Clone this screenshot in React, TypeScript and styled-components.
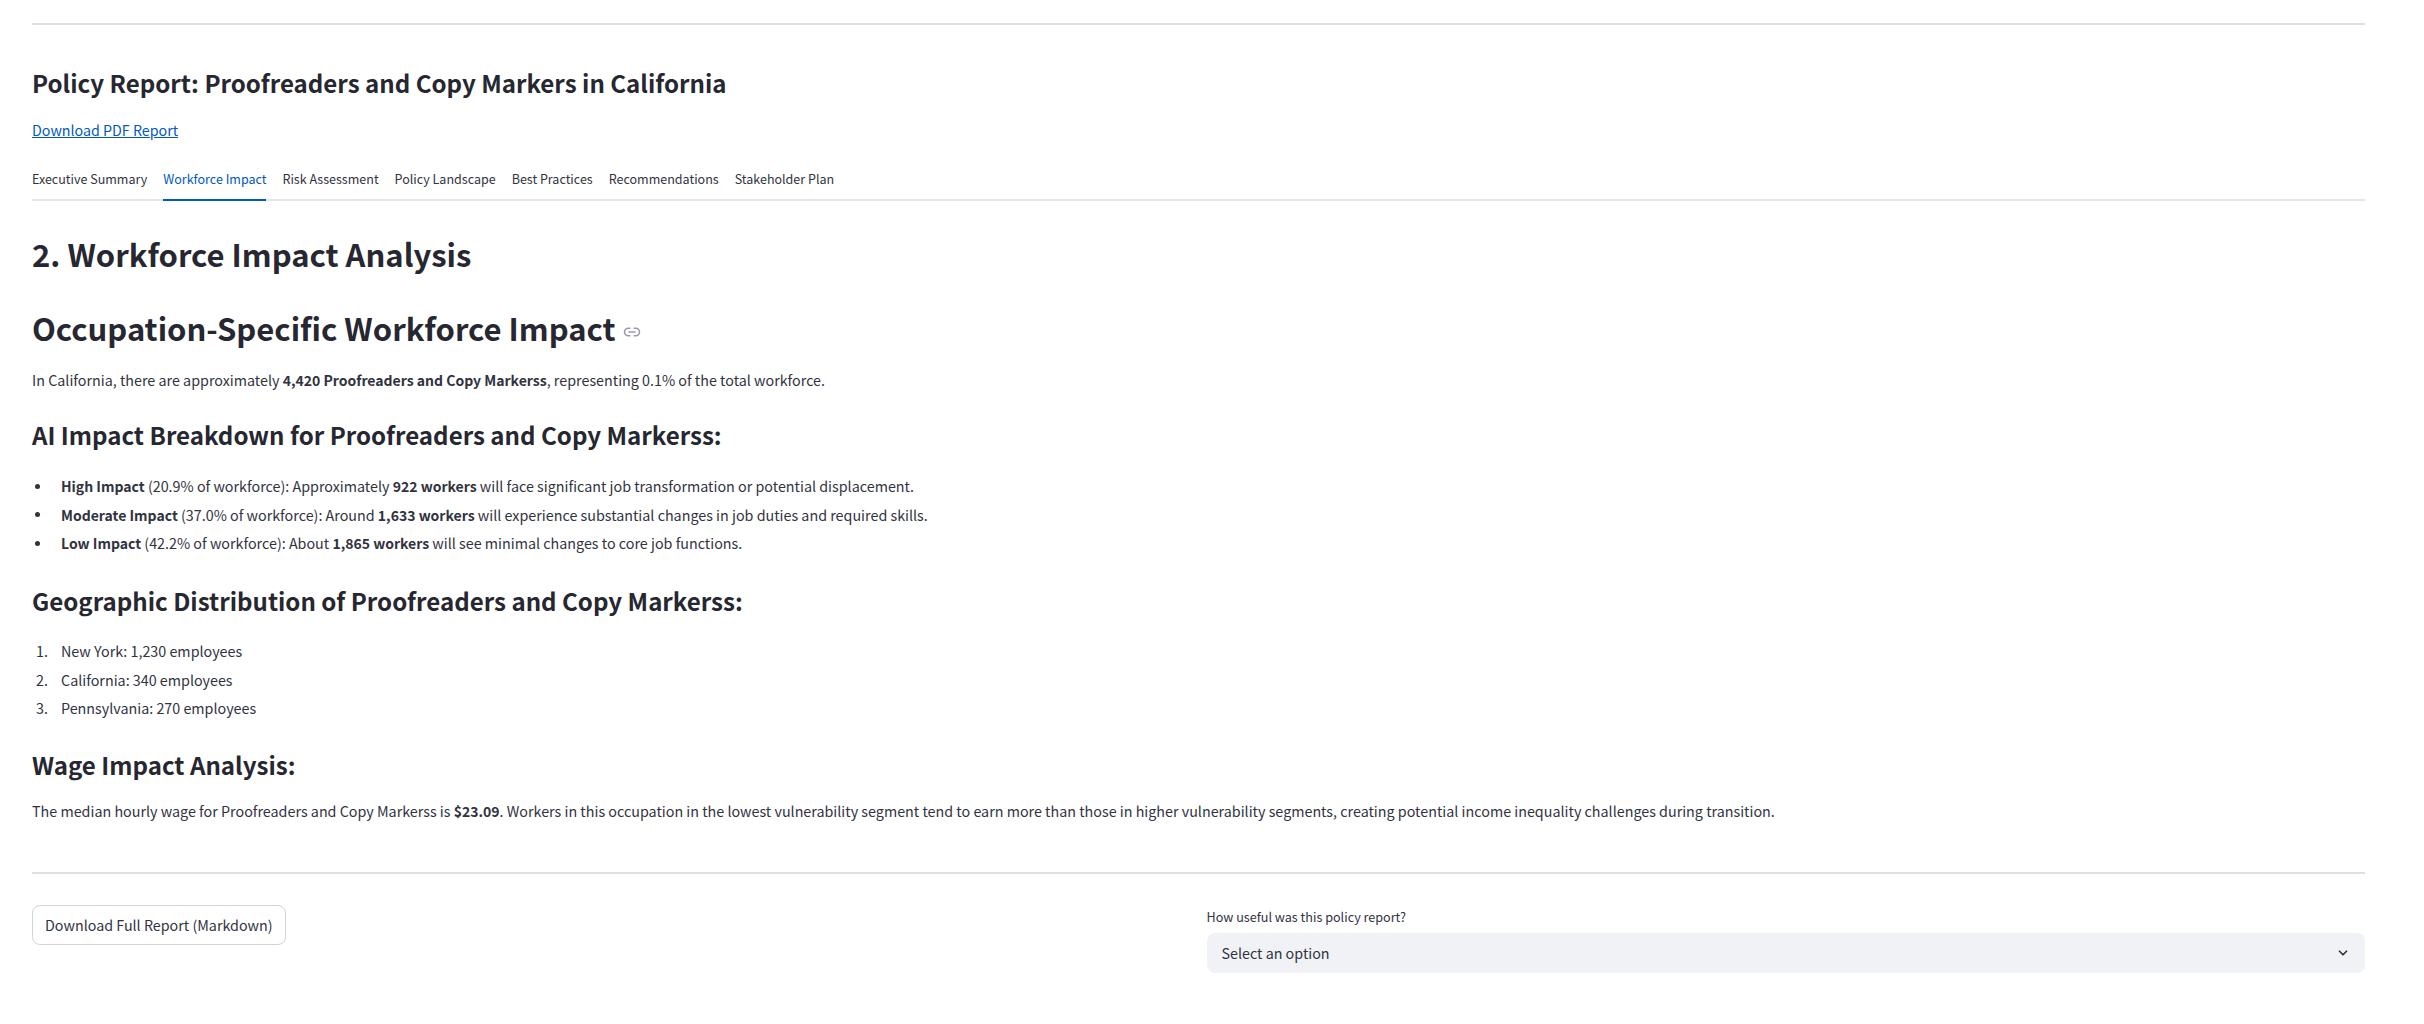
import React from "react";
import styled, { createGlobalStyle } from "styled-components";
import { ChevronDown } from "lucide-react";

const GlobalStyle = createGlobalStyle`
  html, body {
    margin: 0;
    padding: 0;
    background: #ffffff;
  }
  body {
    font-family: "Noto Sans CJK SC", "Noto Sans", sans-serif;
    color: #31333f;
  }
  * {
    box-sizing: border-box;
  }
`;

const Page = styled.div`
  height: 1024px;
  overflow: hidden;
  padding: 23px 59px 0 32px;
`;

const Rule = styled.hr<{ $top?: number; $bottom?: number }>`
  border: 0;
  height: 2px;
  margin: ${(p) => p.$top ?? 0}px 0 ${(p) => p.$bottom ?? 0}px;
  background: #dfdfdf;
`;

const Title = styled.h1`
  margin: 38px 0 0;
  font-size: 24.1px;
  line-height: 40px;
  font-weight: 600;
  color: #262730;
`;

const PdfLink = styled.a`
  display: block;
  margin-top: 15px;
  font-size: 14.25px;
  line-height: 24px;
  color: #0059c1;
  text-decoration: underline;
`;

const TabBar = styled.div`
  display: flex;
  gap: 16px;
  margin-top: 19px;
  border-bottom: 2px solid #e6e6e9;
  height: 40px;
`;

const Tab = styled.div<{ $active?: boolean }>`
  height: 40px;
  font-size: 12.53px;
  line-height: 36px;
  color: ${(p) => (p.$active ? "#0059c1" : "#31333f")};
  border-bottom: 2px solid ${(p) => (p.$active ? "#0059c1" : "transparent")};
`;

const SectionTitle = styled.h2`
  margin: 28px 0 0;
  font-size: 31px;
  line-height: 50px;
  font-weight: 600;
  color: #262730;
`;

const AnchorHeading = styled(SectionTitle)`
  display: flex;
  align-items: center;
  gap: 7px;
  margin-top: 24px;
`;

const LinkMark = styled.svg`
  width: 18px;
  height: 18px;
  margin-top: 8px;
  fill: none;
  stroke: #9a9ca3;
  stroke-width: 2;
  stroke-linecap: round;
`;

const SubTitle = styled.h3<{ $top?: number }>`
  margin: ${(p) => p.$top ?? 22}px 0 0;
  font-size: 24.1px;
  line-height: 40px;
  font-weight: 600;
  color: #262730;
`;

const Para = styled.p<{ $top?: number }>`
  margin: ${(p) => p.$top ?? 14}px 0 0;
  font-size: 14.32px;
  line-height: 24px;
`;

const List = styled.ul<{ $top?: number }>`
  margin: ${(p) => p.$top ?? 16}px 0 0;
  padding: 0;
  list-style: none;
  font-size: 14.32px;
  line-height: 24px;
`;

const Item = styled.li`
  display: flex;
  margin-bottom: 4.6px;
`;

const MarkerCell = styled.span`
  flex: 0 0 29px;
  display: flex;
  align-items: center;
  padding-left: 4px;
`;

const Bullet = styled.span`
  width: 5px;
  height: 5px;
  margin-left: -1px;
  border-radius: 50%;
  background: #31333f;
`;

const Strong = styled.strong`
  font-size: 14px;
  font-weight: 600;
`;

const Footer = styled.div`
  display: grid;
  grid-template-columns: 1fr 1fr;
  gap: 16px;
  margin-top: 30px;
`;

const GhostButton = styled.button`
  height: 40px;
  margin-top: 1px;
  padding: 0 12px 2px;
  font-family: inherit;
  font-size: 14.3px;
  color: #31333f;
  background: #ffffff;
  border: 1px solid #d2d3d6;
  border-radius: 8px;
`;

const FieldLabel = styled.div`
  margin-top: 3px;
  margin-bottom: 6px;
  font-size: 12.6px;
  line-height: 20px;
`;

const SelectBox = styled.div`
  display: flex;
  align-items: center;
  justify-content: space-between;
  height: 40px;
  padding: 0 15px;
  font-size: 14.3px;
  background: #f0f2f6;
  border-radius: 8px;
`;

const SelectText = styled.span`
  margin-top: -1px;
`;

export default function App() {
  return (
    <>
      <GlobalStyle />
      <Page>
        <Rule />
        <Title>Policy Report: Proofreaders and Copy Markers in California</Title>
        <PdfLink href="#">Download PDF Report</PdfLink>
        <TabBar>
          <Tab>Executive Summary</Tab>
          <Tab $active>Workforce Impact</Tab>
          <Tab>Risk Assessment</Tab>
          <Tab>Policy Landscape</Tab>
          <Tab>Best Practices</Tab>
          <Tab>Recommendations</Tab>
          <Tab>Stakeholder Plan</Tab>
        </TabBar>
        <SectionTitle>2. Workforce Impact Analysis</SectionTitle>
        <AnchorHeading>
          Occupation-Specific Workforce Impact
          <LinkMark viewBox="0 0 24 24">
            <path d="M9 17H7A5 5 0 0 1 7 7h2" />
            <path d="M15 7h2a5 5 0 1 1 0 10h-2" />
            <line x1="8" x2="16" y1="12" y2="12" />
          </LinkMark>
        </AnchorHeading>
        <Para $top={15}>
          In California, there are approximately <Strong>4,420 Proofreaders and Copy Markerss</Strong>, representing 0.1% of the total workforce.
        </Para>
        <SubTitle $top={23}>AI Impact Breakdown for Proofreaders and Copy Markerss:</SubTitle>
        <List $top={19}>
          <Item>
            <MarkerCell><Bullet /></MarkerCell>
            <div><Strong>High Impact</Strong> (20.9% of workforce): Approximately <Strong>922 workers</Strong> will face significant job transformation or potential displacement.</div>
          </Item>
          <Item>
            <MarkerCell><Bullet /></MarkerCell>
            <div><Strong>Moderate Impact</Strong> (37.0% of workforce): Around <Strong>1,633 workers</Strong> will experience substantial changes in job duties and required skills.</div>
          </Item>
          <Item>
            <MarkerCell><Bullet /></MarkerCell>
            <div><Strong>Low Impact</Strong> (42.2% of workforce): About <Strong>1,865 workers</Strong> will see minimal changes to core job functions.</div>
          </Item>
        </List>
        <SubTitle $top={26}>Geographic Distribution of Proofreaders and Copy Markerss:</SubTitle>
        <List as="ol" $top={18}>
          <Item><MarkerCell>1.</MarkerCell><div>New York: 1,230 employees</div></Item>
          <Item><MarkerCell>2.</MarkerCell><div>California: 340 employees</div></Item>
          <Item><MarkerCell>3.</MarkerCell><div>Pennsylvania: 270 employees</div></Item>
        </List>
        <SubTitle $top={25}>Wage Impact Analysis:</SubTitle>
        <Para $top={14}>
          The median hourly wage for Proofreaders and Copy Markerss is <Strong>$23.09</Strong>. Workers in this occupation in the lowest vulnerability segment tend to earn more than those in higher vulnerability segments, creating potential income inequality challenges during transition.
        </Para>
        <Rule $top={49} />
        <Footer>
          <div>
            <GhostButton>Download Full Report (Markdown)</GhostButton>
          </div>
          <div>
            <FieldLabel>How useful was this policy report?</FieldLabel>
            <SelectBox>
              <SelectText>Select an option</SelectText>
              <ChevronDown size={14} strokeWidth={3} />
            </SelectBox>
          </div>
        </Footer>
      </Page>
    </>
  );
}
